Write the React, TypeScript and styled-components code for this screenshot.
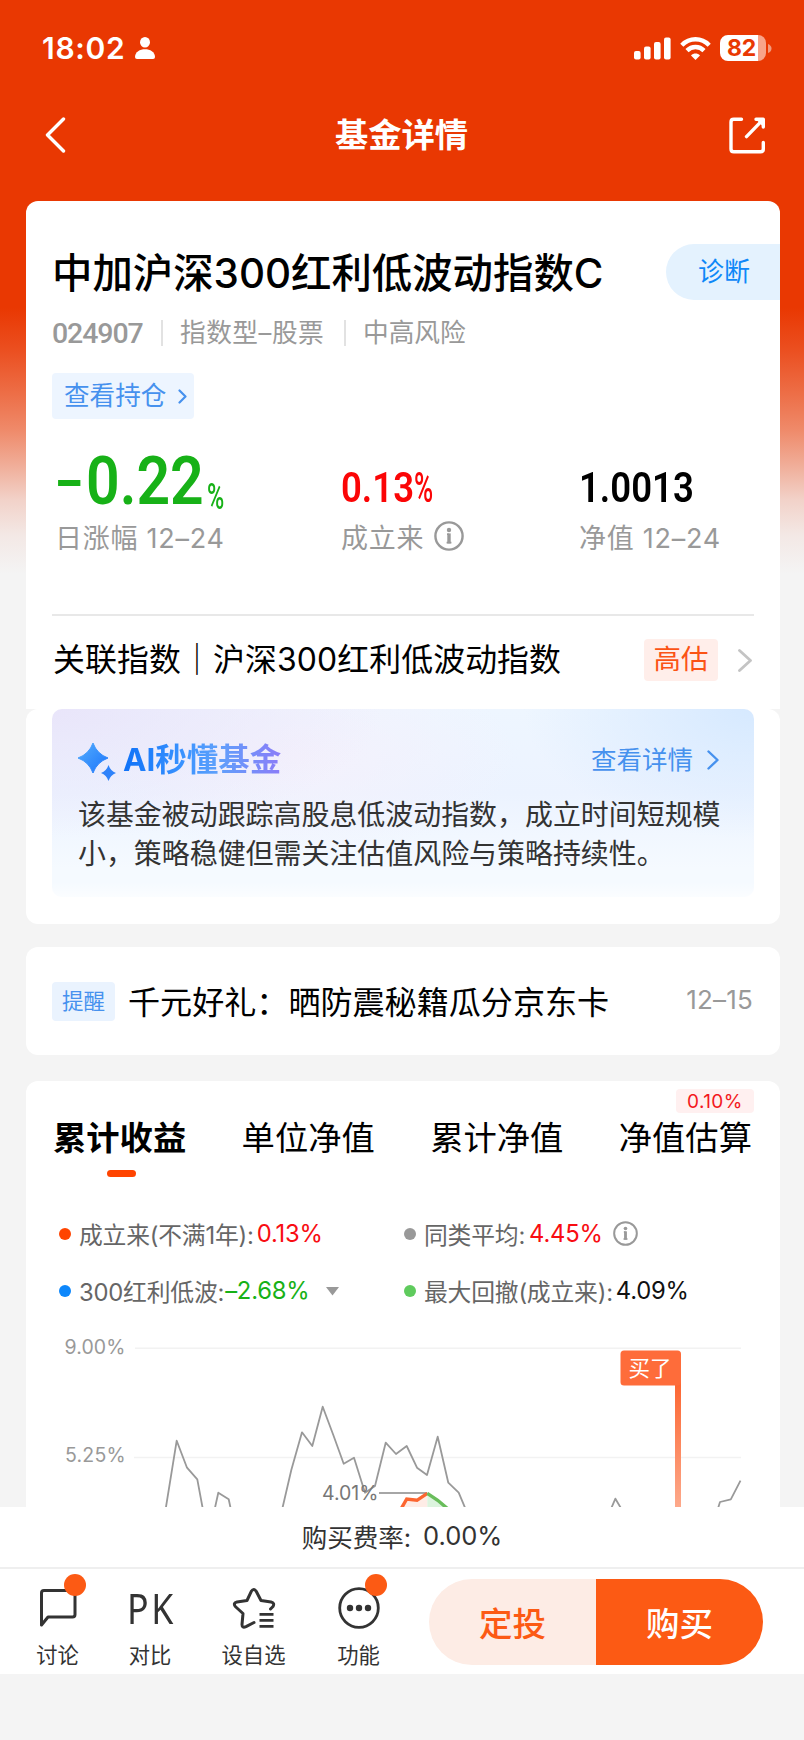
import React from "react";
import styled, { createGlobalStyle } from "styled-components";

const sans = `Inter, "Noto Sans CJK SC", sans-serif`;

const GlobalStyle = createGlobalStyle`
  * { box-sizing: border-box; }
  html, body { margin: 0; padding: 0; background: #f4f4f4; }
  body { font-family: ${sans}; color: #000; }
`;

const Page = styled.div`
  width: 804px;
  height: 1740px;
  overflow: hidden;
  display: flex;
  flex-direction: column;
  white-space: nowrap;
  background: linear-gradient(
      #e93802 0, #e93802 308px, #eb4f20 350px, #ed6f48 395px, #ef8a6a 430px,
      #f0ad98 465px, #f2d2c9 500px, #f3e8e5 535px, #f4f4f4 574px
    ) no-repeat #f4f4f4;
`;

const StatusBar = styled.header`
  height: 96px;
  padding: 0 32px 0 42px;
  display: flex;
  justify-content: space-between;
  align-items: center;
  color: #fff;
`;

const StatusGroup = styled.div<{ $gap: number }>`
  display: flex;
  align-items: center;
  gap: ${(p) => p.$gap}px;
`;

const Clock = styled.span`
  font-size: 30px;
  font-weight: 600;
  line-height: 36px;
  letter-spacing: 0.7px;
`;

const Battery = styled.div`
  width: 46px;
  height: 26px;
  border-radius: 8px;
  display: flex;
  align-items: center;
  justify-content: center;
  padding-right: 3px;
  background: linear-gradient(90deg, #fff 38px, #f8a48a 38px);
  color: #e93802;
  font-size: 23px;
  font-weight: 700;
  letter-spacing: -0.2px;
`;

const NavBar = styled.nav`
  height: 105px;
  padding: 0 38px 27px 45px;
  display: flex;
  align-items: center;
  justify-content: space-between;
`;

const NavTitle = styled.h1`
  margin: 0;
  padding-left: 7px;
  color: #fff;
  font-size: 33.3px;
  line-height: 44px;
  font-weight: 700;
`;

const Scroll = styled.main`
  height: 1306px;
  overflow: hidden;
  padding: 0 24px 0 26px;
`;

const Card = styled.section<{ $gap?: number }>`
  background: #fff;
  border-radius: 12px;
  margin-bottom: ${(p) => p.$gap ?? 0}px;
`;

const SummaryCard = styled(Card)`
  border-radius: 12px 12px 0 0;
`;

const FundHead = styled.div`
  height: 508px;
  padding: 43px 0 0 26px;
`;

const TitleRow = styled.div`
  display: flex;
  justify-content: space-between;
  height: 56px;
`;

const FundName = styled.h2`
  margin: 0;
  font-size: 40.4px;
  line-height: 60px;
  font-weight: 500;
  letter-spacing: 0;
`;

const Diagnose = styled.div`
  width: 114px;
  height: 56px;
  padding: 0 0 5px 32px;
  display: flex;
  align-items: center;
  background: #e4f2fe;
  border-radius: 28px 0 0 28px;
  color: #0e88f8;
  font-size: 26px;
`;

const Meta = styled.div`
  height: 65px;
  padding-top: 1px;
  display: flex;
  align-items: center;
  color: #999;
  font-size: 25.7px;
`;

const Code = styled.span`
  width: 109px;
  font-family: Roboto, sans-serif;
  font-size: 28.5px;
  font-weight: 500;
  letter-spacing: -1.1px;
  line-height: 30px;
  padding-top: 2px;
`;

const MetaItem = styled.span<{ $w?: number }>`
  width: ${(p) => (p.$w ? p.$w + "px" : "auto")};
  border-left: 2px solid #e2e2e2;
  padding-left: 17px;
  line-height: 26px;
  letter-spacing: ${(p) => (p.$w ? 0.5 : 0)}px;
`;

const HoldingTag = styled.div`
  margin-top: 8px;
  width: 142px;
  height: 46px;
  padding: 0 7px 0 12px;
  display: flex;
  align-items: center;
  justify-content: space-between;
  background: #edf5ff;
  border-radius: 4px;
  color: #4691ee;
  font-size: 25.6px;
`;

const HoldingText = styled.span`
  padding-bottom: 5px;
`;

const Metrics = styled.div`
  display: grid;
  grid-template-columns: 286px 238px 1fr;
  padding: 24px 0 0 3px;
`;

const MetricValue = styled.div<{ $lift?: number }>`
  height: 72px;
  padding-bottom: ${(p) => p.$lift ?? 0}px;
  display: flex;
  align-items: flex-end;
  font-family: Roboto, sans-serif;
`;

const Figure = styled.span<{
  $size: number;
  $color: string;
  $scale: number;
  $w: number;
  $weight?: number;
  $raise?: number;
}>`
  display: block;
  width: ${(p) => p.$w}px;
  margin-bottom: ${(p) => p.$raise ?? 0}px;
  font-size: ${(p) => p.$size}px;
  line-height: ${(p) => p.$size}px;
  font-weight: ${(p) => p.$weight ?? 600};
  color: ${(p) => p.$color};
  transform: scaleX(${(p) => p.$scale});
  transform-origin: 0 0;
`;

const MetricLabel = styled.div`
  height: 42px;
  display: flex;
  align-items: center;
  gap: 10px;
  color: #999;
  font-size: 27px;
  letter-spacing: 0.75px;
`;

const IndexRow = styled.div`
  height: 95px;
  margin: -95px 26px 0;
  border-top: 2px solid #e8e8e8;
  padding: 0 2px 5px 1px;
  display: flex;
  align-items: center;
  font-size: 31.9px;
`;

const IndexText = styled.span`
  flex: 1;
  padding-bottom: 6px;
  letter-spacing: 0.1px;
`;

const ValueTag = styled.span`
  width: 74px;
  height: 42px;
  margin-right: 20px;
  padding-bottom: 6px;
  display: flex;
  align-items: center;
  justify-content: center;
  background: #ffeeea;
  border-radius: 4px;
  color: #fb5315;
  font-size: 27.5px;
`;

const AiCard = styled(Card)`
  height: 215px;
  padding: 0 26px;
`;

const AiPanel = styled.div`
  height: 188px;
  padding: 32px 35px 0 26px;
  border-radius: 10px;
  background:
    linear-gradient(rgba(255, 255, 255, 0) 92%, rgba(255, 255, 255, 0.6) 100%),
    radial-gradient(ellipse 230px 130px at 100% 0, #d6e9ff 0, rgba(214, 233, 255, 0) 100%),
    radial-gradient(ellipse 330px 130px at 0 0, #e9e5fa 0, rgba(233, 229, 250, 0) 100%),
    radial-gradient(ellipse 220px 100px at 35% 25%, #f4f1fc 0, rgba(244, 241, 252, 0) 100%),
    linear-gradient(#eef6ff, #ecf3ff 45%, #f5faff 85%);
`;

const AiHead = styled.div`
  height: 41px;
  display: flex;
  align-items: center;
`;

const AiTitle = styled.h3`
  margin: 0 auto 3px 7px;
  font-size: 31.5px;
  line-height: 40px;
  font-weight: 700;
  background: linear-gradient(90deg, #0f72f8, #3c94ff 40%, #5fa0fb 60%, #8b7cf8);
  background-clip: text;
  color: transparent;
`;

const AiMore = styled.span`
  display: flex;
  align-items: center;
  gap: 14px;
  padding-bottom: 4px;
  color: #4691ee;
  font-size: 25.5px;
  line-height: 36px;
`;

const AiText = styled.p`
  margin: 14px 0 0;
  color: #333;
  font-size: 27.95px;
  line-height: 39px;
`;

const NoticeCard = styled(Card)`
  height: 108px;
  padding: 0 27px 0 26px;
  display: flex;
  align-items: center;
`;

const NoticeTag = styled.span`
  width: 63px;
  height: 39px;
  padding-bottom: 3px;
  display: flex;
  align-items: center;
  justify-content: center;
  background: #eaf3fe;
  border-radius: 4px;
  color: #4691ee;
  font-size: 21.5px;
`;

const NoticeText = styled.span`
  flex: 1;
  margin-left: 13px;
  padding-bottom: 3px;
  font-size: 32.1px;
`;

const NoticeDate = styled.span`
  color: #999;
  font-size: 26px;
  letter-spacing: 0.2px;
  padding-bottom: 3px;
`;

const TabsCard = styled(Card)`
  height: 440px;
`;

const Tabs = styled.div`
  height: 124px;
  padding: 35px 28px 0 27px;
  display: flex;
  justify-content: space-between;
`;

const Tab = styled.div<{ $active?: boolean }>`
  position: relative;
  font-size: 33.3px;
  line-height: 44px;
  font-weight: ${(p) => (p.$active ? 700 : 400)};
  &::after {
    content: "";
    display: ${(p) => (p.$active ? "block" : "none")};
    width: 29px;
    height: 7px;
    margin: 10px 0 0 54px;
    border-radius: 4px;
    background: #ff4400;
  }
`;

const Badge = styled.span`
  position: absolute;
  right: -2px;
  top: -27px;
  width: 78px;
  height: 24px;
  border-radius: 4px;
  background: #fff0f0;
  color: #f31820;
  font-size: 19px;
  font-weight: 400;
  line-height: 25px;
  letter-spacing: 0.4px;
  text-align: center;
`;

const Legend = styled.div`
  height: 115px;
  padding-left: 33px;
  display: grid;
  grid-template-columns: 345px 1fr;
  grid-template-rows: 57px 57px;
  align-items: center;
`;

const LegendItem = styled.div`
  display: flex;
  align-items: center;
  color: #666;
  font-size: 23.8px;
  letter-spacing: -0.2px;
`;

const Dot = styled.i<{ $color: string }>`
  width: 12px;
  height: 12px;
  margin-right: 8px;
  border-radius: 50%;
  background: ${(p) => p.$color};
`;

const LegendValue = styled.span<{ $color: string; $gap?: number }>`
  color: ${(p) => p.$color};
  margin: 0 10px 0 ${(p) => p.$gap ?? 3}px;
  font-size: 23.8px;
  letter-spacing: -0.2px;
`;

const ChartSvg = styled.svg`
  display: block;
  font-family: ${sans};
`;

const FeeBar = styled.div`
  height: 60px;
  padding-bottom: 3px;
  display: flex;
  align-items: center;
  justify-content: center;
  gap: 12px;
  background: #fff;
  color: #333;
  font-size: 25.5px;
`;

const BottomBar = styled.footer`
  height: 107px;
  padding: 10px 41px 0 22px;
  display: flex;
  background: #fff;
  border-top: 2px solid #efefef;
`;

const Action = styled.div<{ $w: number }>`
  width: ${(p) => p.$w}px;
  display: flex;
  flex-direction: column;
  align-items: center;
  color: #333;
  font-size: 21.3px;
`;

const ActionIcon = styled.div`
  position: relative;
  height: 58px;
  padding-top: 8px;
`;

const ActionLabel = styled.span`
  line-height: 36px;
`;

const PkText = styled.div`
  font-family: "Noto Sans", sans-serif;
  font-size: 41.5px;
  line-height: 42px;
  font-weight: 400;
  letter-spacing: 3px;
  margin-right: -3px;
  transform: scaleX(0.86);
`;

const RedDot = styled.i<{ $x: number }>`
  position: absolute;
  left: ${(p) => p.$x}px;
  top: -5px;
  width: 22px;
  height: 22px;
  border-radius: 50%;
  background: #fc5a14;
`;

const Buttons = styled.div`
  margin-left: auto;
  width: 334px;
  height: 86px;
  display: flex;
  border-radius: 43px;
  overflow: hidden;
`;

const BuyButton = styled.button<{ $primary?: boolean }>`
  flex: 1;
  border: 0;
  padding: 0 0 1px;
  background: ${(p) => (p.$primary ? "#fc5a14" : "#fdece5")};
  color: ${(p) => (p.$primary ? "#fff" : "#fc5a14")};
  font-family: ${sans};
  font-size: 33.5px;
  font-weight: 500;
`;

function Chevron({ w, h, color, stroke = 2.2 }: { w: number; h: number; color: string; stroke?: number }) {
  return (
    <svg width={w} height={h} viewBox={`0 0 ${w} ${h}`} fill="none">
      <path d={`M1.5 1.5 L${w - 1.5} ${h / 2} L1.5 ${h - 1.5}`} stroke={color} strokeWidth={stroke} strokeLinecap="round" strokeLinejoin="round" />
    </svg>
  );
}

function Info({ size }: { size: number }) {
  return (
    <svg width={size} height={size} viewBox="0 0 30 30" fill="none">
      <circle cx="15" cy="15" r="13.6" stroke="#999" strokeWidth="2.4" />
      <circle cx="15" cy="9" r="2.2" fill="#999" />
      <path d="M13 13.2 H15 M12.6 21.6 H17.4" stroke="#999" strokeWidth="1.6" />
      <path d="M15 12.4 V22.4" stroke="#999" strokeWidth="3.4" />
    </svg>
  );
}

function Chart() {
  const line = { fill: "none", stroke: "#999", strokeWidth: 1.8, strokeLinejoin: "round" as const };
  return (
    <ChartSvg width="754" height="187" viewBox="26 1320 754 187">
      <defs>
        <linearGradient id="pole" x1="0" y1="0" x2="0" y2="1">
          <stop offset="0" stopColor="#fc6530" />
          <stop offset="1" stopColor="#fda98b" />
        </linearGradient>
      </defs>
      <path d="M135 1348.3 H741 M134 1457.5 H741" stroke="#f2f2f2" strokeWidth="1.6" />
      <text x="64.5" y="1353.5" fontSize="19.5" letterSpacing="0.1" fill="#999">9.00%</text>
      <text x="65" y="1462" fontSize="19.5" letterSpacing="0.2" fill="#999">5.25%</text>
      <path {...line} d="M165.5 1510 L176.7 1440.7 L187 1467.7 L197.3 1479.3 L203 1510" />
      <path {...line} d="M214.5 1510 L218.3 1492.7 L228.7 1499.3 L231 1510" />
      <path {...line} d="M282 1510 L291.3 1470 L302 1432.3 L312.3 1446 L322.7 1406.7 L333.3 1435 L343.7 1463.7 L354 1457.7 L365 1492.7 L375 1486 L385.7 1442.7 L396 1454 L406.7 1446 L417 1467.7 L427 1475 L437.7 1436.7 L448.3 1482.7 L458.7 1492.7 L466 1510" />
      <path {...line} d="M610.5 1510 L615.4 1498.7 L622 1510" />
      <path {...line} d="M717.5 1510 L720 1502 L730.8 1499.3 L740.5 1480.7" />
      <path d="M400 1510 L406.7 1499 L417 1500.3 L427.3 1493.3 V1510 Z" fill="#feece6" />
      <path d="M427.3 1493.3 L437.7 1500.3 L449 1510 H427.3 Z" fill="#dcf4de" />
      <path d="M379 1493 H427.3" stroke="#888" strokeWidth="1.6" />
      <path d="M401 1509 L406.7 1499 L417 1500.3 L427.3 1493.3" fill="none" stroke="#fc6530" strokeWidth="3.4" />
      <path d="M427.3 1493.3 L437.7 1500.3 L448 1509" fill="none" stroke="#69bd5b" strokeWidth="3.4" />
      <text x="322" y="1500" fontSize="19.5" fill="#777">4.01%</text>
      <rect x="675" y="1380" width="6" height="127" fill="url(#pole)" />
      <rect x="620.5" y="1350.5" width="60.5" height="35" rx="3.5" fill="#fe6c3a" />
      <text x="628.5" y="1376" fontSize="21.5" fill="#fff">买了</text>
    </ChartSvg>
  );
}

export default function App() {
  return (
    <Page lang="zh-CN">
      <GlobalStyle />
      <StatusBar>
        <StatusGroup $gap={10}>
          <Clock>18:02</Clock>
          <svg width="20" height="22" viewBox="0 0 20 22" fill="#fff">
            <ellipse cx="10" cy="5.3" rx="5" ry="5.3" />
            <path d="M0 20 C0 9.5 20 9.5 20 20 Q20 22 18 22 H2 Q0 22 0 20 Z" />
          </svg>
        </StatusGroup>
        <StatusGroup $gap={9}>
          <svg width="37" height="23" viewBox="0 0 37 23" fill="#fff">
            <rect x="0" y="14" width="6.6" height="8.5" rx="2" />
            <rect x="10" y="9.5" width="6.6" height="13" rx="2" />
            <rect x="20" y="5" width="6.6" height="17.5" rx="2" />
            <rect x="30" y="0.5" width="6.6" height="22" rx="2" />
          </svg>
          <svg width="31" height="23" viewBox="0 0 31 23" fill="none" stroke="#fff" strokeWidth="4.4">
            <path d="M1.8 8.2 C9.5 0.3 21.5 0.3 29.2 8.2" />
            <path d="M7 13.6 C11.7 8.8 19.3 8.8 24 13.6" />
            <path d="M11 18.4 C13.5 16 17.5 16 20 18.4 L15.5 23 Z" fill="#fff" stroke="none" />
          </svg>
          <StatusGroup $gap={2}>
            <Battery>82</Battery>
            <svg width="4" height="9" viewBox="0 0 4 9"><path d="M0 0 Q3.5 1.5 3.5 4.5 T0 9 Z" fill="#f29a7d" /></svg>
          </StatusGroup>
        </StatusGroup>
      </StatusBar>
      <NavBar>
        <svg width="22" height="36" viewBox="0 0 22 36" fill="none">
          <path d="M18.5 2 L2.5 18 L18.5 34" stroke="#fff" strokeWidth="3.4" strokeLinecap="round" strokeLinejoin="round" />
        </svg>
        <NavTitle>基金详情</NavTitle>
        <svg width="37" height="37" viewBox="0 0 37 37" fill="none" stroke="#fff" strokeWidth="3.4" strokeLinecap="round" strokeLinejoin="round">
          <path d="M12.5 2.3 H4.8 Q2 2.3 2 5 V32 Q2 34.8 4.8 34.8 H31.5 Q34.3 34.8 34.3 32 V25.5" />
          <path d="M27 2.3 H34.3 V10 M33 3.6 L17.5 19.6" />
          <path d="M27 2.3 H34.3 V10 Z" fill="#fff" stroke="none" />
        </svg>
      </NavBar>
      <Scroll>
        <SummaryCard>
          <FundHead>
            <TitleRow>
              <FundName>中加沪深300红利低波动指数C</FundName>
              <Diagnose>诊断</Diagnose>
            </TitleRow>
            <Meta>
              <Code>024907</Code>
              <MetaItem $w={183}>指数型–股票</MetaItem>
              <MetaItem>中高风险</MetaItem>
            </Meta>
            <HoldingTag>
              <HoldingText>查看持仓</HoldingText>
              <Chevron w={9} h={15} color="#4691ee" />
            </HoldingTag>
            <Metrics>
              <div>
                <MetricValue>
                  <Figure $size={47} $color="#17b117" $scale={0.92} $w={31} $weight={900} $raise={9}>–</Figure>
                  <Figure $size={67} $color="#17b117" $scale={0.88} $w={121}>0.22</Figure>
                  <Figure $size={36} $color="#17b117" $scale={0.65} $w={20} $weight={500}>%</Figure>
                </MetricValue>
                <MetricLabel>日涨幅 12–24</MetricLabel>
              </div>
              <div>
                <MetricValue $lift={6}>
                  <Figure $size={42} $color="#fb0506" $scale={0.87} $w={73}>0.13</Figure>
                  <Figure $size={42} $color="#fb0506" $scale={0.62} $w={32} $weight={500}>%</Figure>
                </MetricValue>
                <MetricLabel>成立来 <Info size={30} /></MetricLabel>
              </div>
              <div>
                <MetricValue $lift={6}><Figure $size={42} $color="#000" $scale={0.87} $w={120}>1.0013</Figure></MetricValue>
                <MetricLabel>净值 12–24</MetricLabel>
              </div>
            </Metrics>
          </FundHead>
          <IndexRow>
            <IndexText>关联指数｜沪深300红利低波动指数</IndexText>
            <ValueTag>高估</ValueTag>
            <Chevron w={14} h={23} color="#c4c4c4" stroke={2.8} />
          </IndexRow>
        </SummaryCard>
        <AiCard $gap={23}>
          <AiPanel>
            <AiHead>
              <svg width="38" height="39" viewBox="0 0 38 39">
                <defs>
                  <linearGradient id="spark" x1="0" y1="0" x2="1" y2="1">
                    <stop offset="0" stopColor="#54adfd" />
                    <stop offset="1" stopColor="#1b74fb" />
                  </linearGradient>
                </defs>
                <path d="M15 1 Q19 12 30 16 Q19 20 15 31 Q11 20 0 16 Q11 12 15 1 Z" fill="url(#spark)" stroke="url(#spark)" strokeWidth="1" strokeLinejoin="round" />
                <path d="M30.5 23 Q32.5 29 38 31 Q32.5 33 30.5 39 Q28.5 33 23 31 Q28.5 29 30.5 23 Z" fill="#2f83fa" />
              </svg>
              <AiTitle>AI秒懂基金</AiTitle>
              <AiMore>查看详情 <Chevron w={12} h={20} color="#4691ee" stroke={2.4} /></AiMore>
            </AiHead>
            <AiText>该基金被动跟踪高股息低波动指数，成立时间短规模<br />小，策略稳健但需关注估值风险与策略持续性。</AiText>
          </AiPanel>
        </AiCard>
        <NoticeCard $gap={26}>
          <NoticeTag>提醒</NoticeTag>
          <NoticeText>千元好礼：晒防震秘籍瓜分京东卡</NoticeText>
          <NoticeDate>12–15</NoticeDate>
        </NoticeCard>
        <TabsCard>
          <Tabs>
            <Tab $active>累计收益</Tab>
            <Tab>单位净值</Tab>
            <Tab>累计净值</Tab>
            <Tab>净值估算<Badge>0.10%</Badge></Tab>
          </Tabs>
          <Legend>
            <LegendItem><Dot $color="#ff4400" />成立来(不满1年):<LegendValue $color="#f80d12">0.13%</LegendValue></LegendItem>
            <LegendItem><Dot $color="#999" />同类平均:<LegendValue $color="#f80d12" $gap={4}>4.45%</LegendValue><Info size={25} /></LegendItem>
            <LegendItem>
              <Dot $color="#0d87fb" />300红利低波:<LegendValue $color="#17b117" $gap={1}>–2.68%</LegendValue>
              <svg width="24" height="10" viewBox="-2 0 24 10"><path d="M5 1 H18 L11.5 9.5 Z" fill="#999" /></svg>
            </LegendItem>
            <LegendItem><Dot $color="#5fcb5d" />最大回撤(成立来):<LegendValue $color="#111">4.09%</LegendValue></LegendItem>
          </Legend>
          <Chart />
        </TabsCard>
      </Scroll>
      <FeeBar><span>购买费率:</span><span>0.00%</span></FeeBar>
      <BottomBar>
        <Action $w={71}>
          <ActionIcon>
            <svg width="38" height="42" viewBox="0 0 38 42" fill="none">
              <path d="M5 3.5 H33.5 Q36 3.5 36 6 V27.5 Q36 30 33.5 30 H9 L2.5 38 V6 Q2.5 3.5 5 3.5" stroke="#333" strokeWidth="3" strokeLinejoin="round" />
            </svg>
            <RedDot $x={25} />
          </ActionIcon>
          <ActionLabel>讨论</ActionLabel>
        </Action>
        <Action $w={114}>
          <ActionIcon><PkText>PK</PkText></ActionIcon>
          <ActionLabel>对比</ActionLabel>
        </Action>
        <Action $w={93}>
          <ActionIcon>
            <svg width="44" height="42" viewBox="0 0 44 42" fill="none" stroke="#333" strokeWidth="3" strokeLinejoin="round" strokeLinecap="round">
              <path d="M22 35.5 L14 39.6 Q10 41.5 10 37.5 L11 26.5 L3.3 19.5 Q0.8 16 5 15 L15 13.5 L19.3 4.3 Q21.7 0.5 24.2 4.3 L29 13.5 L39 15 Q43 16 41 19.5 L38.5 22" />
              <path d="M27.5 27.3 H41.5 M27.5 33.3 H41.5 M27.5 39.3 H41.5" strokeLinecap="butt" strokeWidth="2.8" />
            </svg>
          </ActionIcon>
          <ActionLabel>设自选</ActionLabel>
        </Action>
        <Action $w={117}>
          <ActionIcon>
            <svg width="42" height="42" viewBox="0 0 42 42" fill="none">
              <circle cx="21" cy="21" r="19.3" stroke="#333" strokeWidth="2.8" />
              <g fill="#333"><circle cx="12" cy="21" r="3.2" /><circle cx="21" cy="21" r="3.2" /><circle cx="30" cy="21" r="3.2" /></g>
            </svg>
            <RedDot $x={27} />
          </ActionIcon>
          <ActionLabel>功能</ActionLabel>
        </Action>
        <Buttons>
          <BuyButton>定投</BuyButton>
          <BuyButton $primary>购买</BuyButton>
        </Buttons>
      </BottomBar>
    </Page>
  );
}
